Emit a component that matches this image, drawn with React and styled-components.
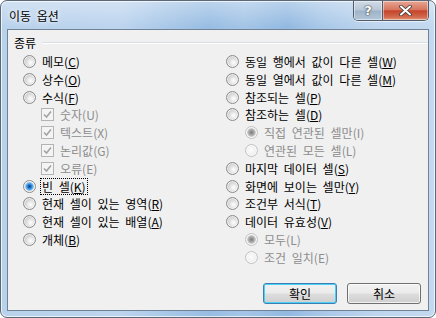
import styled, { createGlobalStyle, css } from "styled-components";

const GlobalStyle = createGlobalStyle`
  html, body { margin: 0; padding: 0; background: #ffffff; }
  body { font-family: "Noto Sans CJK KR", "Noto Sans", sans-serif; word-spacing: 3px; }
`;

const left = [
  { label: "메모", key: "C" },
  { label: "상수", key: "O" },
  { label: "수식", key: "F" },
  { label: "숫자", key: "U", kind: "check", indent: 18, disabled: true, plain: true },
  { label: "텍스트", key: "X", kind: "check", indent: 18, disabled: true, plain: true },
  { label: "논리값", key: "G", kind: "check", indent: 18, disabled: true, plain: true },
  { label: "오류", key: "E", kind: "check", indent: 18, disabled: true, plain: true },
  { label: "빈 셀", key: "K", checked: true, focus: true },
  { label: "현재 셀이 있는 영역", key: "R" },
  { label: "현재 셀이 있는 배열", key: "A" },
  { label: "개체", key: "B" },
];

const right = [
  { label: "동일 행에서 값이 다른 셀", key: "W" },
  { label: "동일 열에서 값이 다른 셀", key: "M" },
  { label: "참조되는 셀", key: "P" },
  { label: "참조하는 셀", key: "D" },
  { label: "직접 연관된 셀만", key: "I", indent: 19, disabled: true, checked: true, plain: true },
  { label: "연관된 모든 셀", key: "L", indent: 19, disabled: true, plain: true },
  { label: "마지막 데이터 셀", key: "S" },
  { label: "화면에 보이는 셀만", key: "Y" },
  { label: "조건부 서식", key: "T" },
  { label: "데이터 유효성", key: "V" },
  { label: "모두", key: "L", indent: 19, disabled: true, checked: true, plain: true },
  { label: "조건 일치", key: "E", indent: 19, disabled: true, plain: true },
];

function Option({ item }) {
  const { label, key, kind, indent = 0, disabled, checked, plain, focus } = item;
  return (
    <Row $indent={indent} $disabled={disabled}>
      {kind === "check" ? (
        <CheckBox $disabled={disabled}>
          <svg width="9" height="9" viewBox="0 0 9 9">
            <path d="M1 4.5 L3.5 7 L8 1.5" fill="none" stroke="#a3a3a3" strokeWidth="1.6" />
          </svg>
        </CheckBox>
      ) : (
        <Radio $disabled={disabled} $checked={checked} />
      )}
      <Label $focus={focus}>
        {label}({plain ? key : <u>{key}</u>})
      </Label>
    </Row>
  );
}

export default function App() {
  return (
    <>
      <GlobalStyle />
      <Window>
        <TitleBar>
          <Title>이동 옵션</Title>
          <Caption>
            <HelpButton>?</HelpButton>
            <CloseButton>
              <svg width="13" height="11" viewBox="0 0 13 11">
                <path d="M2 1.5 L11 9.5 M11 1.5 L2 9.5" stroke="#3a3a3a" strokeWidth="3.6" strokeLinecap="round" />
                <path d="M2 1.5 L11 9.5 M11 1.5 L2 9.5" stroke="#ffffff" strokeWidth="2" strokeLinecap="round" />
              </svg>
            </CloseButton>
          </Caption>
        </TitleBar>
        <Client>
          <GroupHeader>
            <span>종류</span>
            <GroupLine />
          </GroupHeader>
          <Columns>
            <Column>
              {left.map((item, i) => (
                <Option key={i} item={item} />
              ))}
            </Column>
            <Column>
              {right.map((item, i) => (
                <Option key={i} item={item} />
              ))}
            </Column>
          </Columns>
          <Footer>
            <Button $default>확인</Button>
            <Button>취소</Button>
          </Footer>
        </Client>
      </Window>
    </>
  );
}

const Window = styled.div`
  width: 436px;
  height: 318px;
  box-sizing: border-box;
  border: 1px solid #5a6878;
  border-radius: 7px;
  overflow: hidden;
  display: flex;
  flex-direction: column;
  background:
    linear-gradient(180deg, rgba(255, 255, 255, 0.35) 0px, rgba(255, 255, 255, 0) 26px),
    linear-gradient(90deg, #b9d2ec 0%, #bcd4ee 28%, #a9c8e8 38%, #98bde3 48%, #a4c5e7 56%, #93b9e1 66%, #a9c8e8 74%, #bdd5ee 86%, #c3d9f0 100%);
  box-shadow: inset 0 0 0 1px rgba(255, 255, 255, 0.7);
`;

const TitleBar = styled.div`
  height: 28px;
  display: flex;
  align-items: flex-start;
  padding-left: 8px;
`;

const Title = styled.div`
  font-size: 12px;
  line-height: 14px;
  margin-top: 8px;
  color: #000;
  text-shadow: 0 0 6px rgba(255, 255, 255, 0.9), 0 0 3px rgba(255, 255, 255, 0.9);
`;

const Caption = styled.div`
  margin-left: auto;
  margin-right: 6px;
  display: flex;
  height: 19px;
  border: 1px solid #4f5b6a;
  border-top: none;
  border-radius: 0 0 5px 5px;
  overflow: hidden;
  box-shadow: 0 1px 0 rgba(255, 255, 255, 0.6);
`;

const captionButton = css`
  height: 100%;
  display: flex;
  align-items: center;
  justify-content: center;
  box-shadow: inset 0 0 0 1px rgba(255, 255, 255, 0.45);
`;

const HelpButton = styled.div`
  ${captionButton};
  width: 28px;
  border-right: 1px solid #4f5b6a;
  font-family: "DejaVu Sans", sans-serif;
  font-weight: bold;
  font-size: 13px;
  color: #fff;
  text-shadow: 0 0 1px #333, 0 0 2px #333;
  background: linear-gradient(180deg, #d0dbe6 0%, #b7c7d7 48%, #9fb3c8 52%, #b3c6d9 100%);
`;

const CloseButton = styled.div`
  ${captionButton};
  width: 45px;
  background: linear-gradient(180deg, #e6a795 0%, #d8765f 45%, #c4442b 52%, #d26a4f 85%, #e39b7c 100%);
`;

const Client = styled.div`
  flex: 1;
  margin: 0 6px 6px 6px;
  border: 1px solid #6f8296;
  background: #f0f0f0;
  display: flex;
  flex-direction: column;
  padding: 6px 0 6px 6px;
  font-size: 12px;
  color: #000;
`;

const GroupHeader = styled.div`
  display: flex;
  align-items: center;
  height: 14px;
  line-height: 14px;
  gap: 6px;
`;

const GroupLine = styled.div`
  flex: 1;
  height: 1px;
  background: #d5dfe5;
  border-bottom: 1px solid #ffffff;
`;

const Columns = styled.div`
  display: grid;
  grid-template-columns: 203px 1fr;
  padding-left: 9px;
  margin-top: 2.6px;
`;

const Column = styled.div`
  display: flex;
  flex-direction: column;
`;

const Row = styled.div`
  height: 17.8px;
  display: flex;
  align-items: center;
  gap: 5px;
  padding-left: ${(p) => p.$indent}px;
  color: ${(p) => (p.$disabled ? "#8d8d8d" : "#000")};
  white-space: nowrap;
`;

const Label = styled.span`
  line-height: 15px;
  padding: 0 1px;
  margin-left: -1px;
  border: 1px dotted ${(p) => (p.$focus ? "#000" : "transparent")};
  u {
    text-underline-offset: 1px;
  }
`;

const Radio = styled.span`
  width: 13px;
  height: 13px;
  box-sizing: border-box;
  border-radius: 50%;
  flex: none;
  border: 1px solid ${(p) => (p.$disabled ? "#c2c2c2" : "#8c8c8c")};
  background: ${(p) => {
    if (p.$checked && !p.$disabled)
      return "radial-gradient(circle at 50% 50%, #0c3d78 0px, #1b6bc2 1.5px, #4ba3ea 3px, #8cc7f3 4px, #d6d6d6 4.6px, #f4f4f4 5.5px)";
    if (p.$checked && p.$disabled)
      return "radial-gradient(circle at 50% 50%, #7a7a7a 0px, #9a9a9a 1.8px, #b8b8b8 3.4px, #dcdcdc 4.4px, #f4f4f4 5.5px)";
    if (p.$disabled) return "radial-gradient(circle at 45% 45%, #fbfbfb 0px, #eeeeee 6px)";
    return "radial-gradient(circle at 60% 60%, #ffffff 0px, #f0f0f0 2px, #d2d2d2 5.5px)";
  }};
  box-shadow: inset 0 0 0 1px rgba(255, 255, 255, 0.6);
`;

const CheckBox = styled.span`
  width: 13px;
  height: 13px;
  box-sizing: border-box;
  flex: none;
  border: 1px solid #b4b4b4;
  background: #f4f4f4;
  display: flex;
  align-items: center;
  justify-content: center;
`;

const Footer = styled.div`
  margin-top: auto;
  display: flex;
  justify-content: flex-end;
  gap: 10px;
  padding-right: 7px;
`;

const Button = styled.div`
  width: 74px;
  height: 21px;
  box-sizing: border-box;
  border-radius: 3px;
  display: flex;
  align-items: center;
  justify-content: center;
  font-size: 12px;
  color: #000;
  border: 1px solid ${(p) => (p.$default ? "#3c7fb1" : "#707070")};
  background: linear-gradient(180deg, #f2f2f2 0%, #ebebeb 48%, #dddddd 52%, #cfcfcf 100%);
  box-shadow: inset 0 0 0 1px ${(p) => (p.$default ? "#48d0f8" : "rgba(255,255,255,0.7)")};
`;
